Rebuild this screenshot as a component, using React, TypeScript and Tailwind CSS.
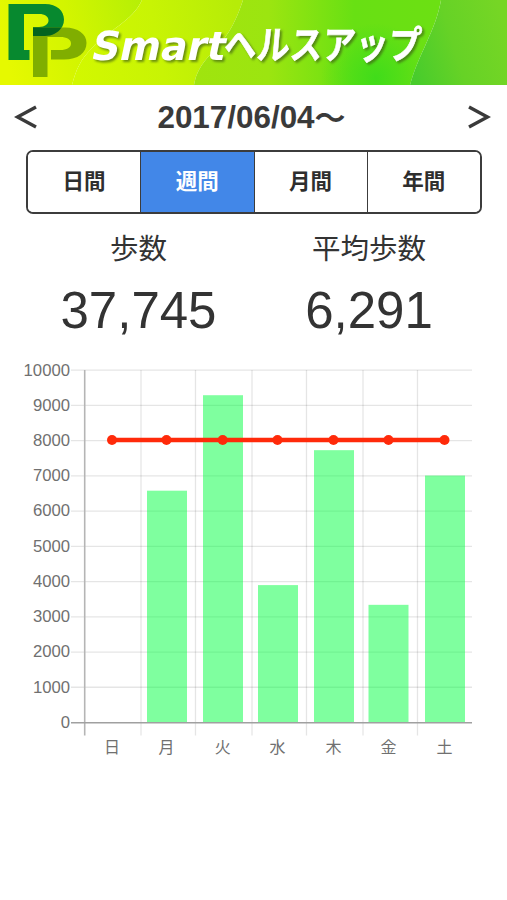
const sans = "font-['Liberation_Sans','Noto_Sans_CJK_JP',sans-serif]";

const days = [
  { label: '日', x: 112, left: 92, steps: 0 },
  { label: '月', x: 166.5, left: 147, steps: 6580 },
  { label: '火', x: 222.7, left: 203, steps: 9290 },
  { label: '水', x: 277.5, left: 258, steps: 3900 },
  { label: '木', x: 333.5, left: 314, steps: 7730 },
  { label: '金', x: 388.5, left: 368.5, steps: 3340 },
  { label: '土', x: 444.5, left: 425, steps: 7010 },
];
const columns = [141, 195.5, 252, 306.5, 363, 417.5];
const ticks = [0, 1000, 2000, 3000, 4000, 5000, 6000, 7000, 8000, 9000, 10000];
const toY = (value: number) => 362.5 - value * 0.03523;

function Header() {
  return (
    <header className="h-[85px] w-full overflow-hidden">
      <svg width="507" height="85" viewBox="0 0 507 85" className="block">
        <defs>
          <linearGradient id="lime" x1="0" y1="40" x2="140" y2="0" gradientUnits="userSpaceOnUse">
            <stop offset="0" stopColor="#e6f900" />
            <stop offset="0.5" stopColor="#d2f500" />
            <stop offset="1" stopColor="#b6ef06" />
          </linearGradient>
          <linearGradient id="middle" x1="75" y1="60" x2="240" y2="30" gradientUnits="userSpaceOnUse">
            <stop offset="0" stopColor="#d2f800" />
            <stop offset="0.5" stopColor="#c8f404" />
            <stop offset="1" stopColor="#b6ec08" />
          </linearGradient>
          <linearGradient id="green" x1="195" y1="0" x2="440" y2="0" gradientUnits="userSpaceOnUse">
            <stop offset="0" stopColor="#a0e40e" />
            <stop offset="0.3" stopColor="#9ce510" />
            <stop offset="0.65" stopColor="#68e013" />
            <stop offset="1" stopColor="#6ce013" />
          </linearGradient>
          <linearGradient id="edge" x1="410" y1="60" x2="507" y2="30" gradientUnits="userSpaceOnUse">
            <stop offset="0" stopColor="#48cc2c" />
            <stop offset="0.45" stopColor="#66d226" />
            <stop offset="1" stopColor="#76d625" />
          </linearGradient>
          <radialGradient id="glow" cx="376" cy="78" r="55" gradientUnits="userSpaceOnUse">
            <stop offset="0" stopColor="#40dc1a" />
            <stop offset="1" stopColor="#40dc1a" stopOpacity="0" />
          </radialGradient>
        </defs>
        <path d="M0 0H142C132 22 108 30 92 48C80 60 76 70 72 85H0Z" fill="url(#lime)" />
        <path d="M142 0H243C234 28 224 40 212 53C200 65 196 74 194 85H72C76 70 80 60 92 48C108 30 132 22 142 0Z" fill="url(#middle)" />
        <path d="M243 0H441C436 30 418 55 410 85H194C196 74 200 65 212 53C224 40 234 28 243 0Z" fill="url(#green)" />
        <path d="M243 0H441C436 30 418 55 410 85H194C196 74 200 65 212 53C224 40 234 28 243 0Z" fill="url(#glow)" />
        <path d="M441 0H507V85H410C418 55 436 30 441 0Z" fill="url(#edge)" />

        <path
          fillRule="evenodd"
          d="M8.5 4H45C57 4 64 11 64 19.5C64 29 56 36 45 36H33V27H39C45 27 48.5 24 48.5 20.5C48.5 16.5 45 14 39 14H24V50H29.5V60H8.5Z"
          fill="#07892f"
        />
        <path
          fillRule="evenodd"
          d="M33 27.5H65C78 27.5 86.5 34 86.5 43C86.5 53 78 59.5 64 59.5H51V50H60C67 50 71 47.5 71 43.5C71 39.5 67 37 60 37H47.5V77H33Z"
          fill="#80ae00"
        />
        <path d="M33 27.5H61.5C58 33 52 36 45 36H33Z" fill="#04641f" />

        <g className="drop-shadow-[2px_2px_1px_rgba(60,90,20,0.65)]" fill="#fff">
          <g transform="translate(89.5 60) skewX(-12)">
            <text
              x="0"
              y="0"
              textLength="134"
              lengthAdjust="spacingAndGlyphs"
              className="font-['DejaVu_Sans',sans-serif] text-[40px] font-bold"
            >
              Smart
            </text>
          </g>
          <g transform="translate(223 60) skewX(-5)">
            <text
              x="0"
              y="-1"
              textLength="197"
              lengthAdjust="spacingAndGlyphs"
              stroke="#fff"
              strokeWidth="0.6"
              className="font-['Noto_Sans_CJK_JP',sans-serif] text-[39px] font-bold"
            >
              ヘルスアップ
            </text>
          </g>
        </g>
      </svg>
    </header>
  );
}

function Chevron({ flip = false }: { flip?: boolean }) {
  return (
    <svg
      width="24"
      height="26"
      viewBox="0 0 24 26"
      fill="none"
      stroke="#3a3a3a"
      strokeWidth="3.4"
      className={flip ? 'mb-px -scale-x-100' : 'mb-px'}
    >
      <path d="M22 3L3.5 13L22 23" />
    </svg>
  );
}

function Tabs() {
  const tabs = ['日間', '週間', '月間', '年間'];
  return (
    <div className="ml-[26px] mt-px flex h-16 w-[456px] overflow-hidden rounded-[7px] border-2 border-[#3c3c3c]">
      {tabs.map((tab, i) => (
        <button
          key={tab}
          className={`flex flex-1 items-center justify-center pt-0.5 text-[21.5px] font-bold leading-none ${
            i > 0 ? 'border-l-[1.5px] border-[#3c3c3c]' : ''
          } ${i === 1 ? 'bg-[#4287e8] text-white' : 'bg-white text-[#2e2e2e]'}`}
        >
          {tab}
        </button>
      ))}
    </div>
  );
}

function Stat({ label, value, className }: { label: string; value: string; className: string }) {
  return (
    <div className={`flex flex-col items-center text-[#333] ${className}`}>
      <div className="h-[38px] text-[28.5px] leading-[38px]">{label}</div>
      <div className="mt-[13px] text-[51px] leading-[60px]">{value}</div>
    </div>
  );
}

function Chart() {
  return (
    <svg width="507" height="420" viewBox="0 0 507 420" className="block">
      <g stroke="#000" strokeOpacity="0.1" strokeWidth="1.3">
        {ticks.slice(1).map((t) => (
          <line key={t} x1="71" x2="472" y1={toY(t)} y2={toY(t)} />
        ))}
        {columns.map((x) => (
          <line key={x} x1={x} x2={x} y1="10" y2="375.5" />
        ))}
      </g>
      <line x1="84.7" x2="84.7" y1="10" y2="375.5" stroke="#b5b5b5" strokeWidth="1.6" />
      {days.map((d) => (
        <rect
          key={d.label}
          x={d.left}
          y={toY(d.steps)}
          width="40"
          height={d.steps * 0.03523}
          fill="#00ff40"
          fillOpacity="0.5"
        />
      ))}
      <line x1="71" x2="472" y1="362.7" y2="362.7" stroke="#a0a0a0" strokeWidth="1.4" />
      <line x1="112" x2="444.5" y1="80" y2="80" stroke="#ff2a0a" strokeWidth="4.4" />
      {days.map((d) => (
        <circle key={d.label} cx={d.x} cy="80" r="5" fill="#ff2a0a" />
      ))}
      <g fill="#707070" className="text-[16.7px]">
        {ticks.map((t) => (
          <text key={t} x="70" y={toY(t) + 5.3} textAnchor="end">
            {t}
          </text>
        ))}
        {days.map((d) => (
          <text key={d.label} x={d.x} y="392.5" textAnchor="middle" className="text-[16px]">
            {d.label}
          </text>
        ))}
      </g>
    </svg>
  );
}

export default function App() {
  return (
    <div lang="ja" className={`h-[900px] w-[507px] overflow-hidden bg-white ${sans}`}>
      <Header />
      <div className="flex h-16 items-center justify-between pl-3.5 pr-4">
        <Chevron />
        <h1 className="flex items-center pr-0.5 pt-0.5 text-[31.4px] font-bold leading-none text-[#3a3a3a]">
          2017/06/04<span className="text-[31px]">～</span>
        </h1>
        <Chevron flip />
      </div>
      <Tabs />
      <section className="flex h-[146px] pt-4">
        <Stat label="歩数" value="37,745" className="w-[277px]" />
        <Stat label="平均歩数" value="6,291" className="w-[184px]" />
      </section>
      <Chart />
    </div>
  );
}
